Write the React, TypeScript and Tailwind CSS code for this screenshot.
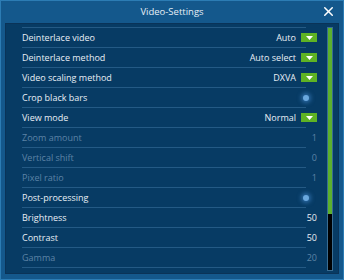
import { X } from "lucide-react";

type Row = {
  label: string;
  value?: string;
  kind: "select" | "toggle" | "number";
  disabled?: boolean;
};

const ROWS: Row[] = [
  { label: "Deinterlace video", value: "Auto", kind: "select" },
  { label: "Deinterlace method", value: "Auto select", kind: "select" },
  { label: "Video scaling method", value: "DXVA", kind: "select" },
  { label: "Crop black bars", kind: "toggle" },
  { label: "View mode", value: "Normal", kind: "select" },
  { label: "Zoom amount", value: "1", kind: "number", disabled: true },
  { label: "Vertical shift", value: "0", kind: "number", disabled: true },
  { label: "Pixel ratio", value: "1", kind: "number", disabled: true },
  { label: "Post-processing", kind: "toggle" },
  { label: "Brightness", value: "50", kind: "number" },
  { label: "Contrast", value: "50", kind: "number" },
  { label: "Gamma", value: "20", kind: "number", disabled: true },
];

function SelectArrow() {
  return (
    <span className="ml-[5px] flex h-[9px] w-[16px] items-center justify-center bg-[#5fb324]">
      <svg width="7" height="4" viewBox="0 0 7 4">
        <path d="M0 0 H7 L3.5 4 Z" fill="#ffffff" />
      </svg>
    </span>
  );
}

function Toggle() {
  return (
    <span className="mr-[8px] block h-[6px] w-[6px] rounded-full bg-[#6aa8de] shadow-[0_0_4px_2px_rgba(70,140,210,0.6)]" />
  );
}

export default function App() {
  return (
    <div
      className="flex h-[280px] w-[344px] flex-col border border-[#2c7cb4] bg-[#14588c] text-[9px]"
      style={{ fontFamily: "'Open Sans', 'Noto Sans', sans-serif" }}
    >
      <div className="relative flex h-[22px] items-center justify-center text-[9.5px] text-[#e6eef6]">
        <span>Video-Settings</span>
        <X className="absolute right-[7px] top-[3px] h-[15px] w-[15px] text-white" strokeWidth={2.4} />
      </div>

      <div className="mx-[4px] mb-[5px] flex flex-1 border border-[#0a3358] bg-[#073b64] pt-[3px]">
        <div className="flex flex-1 flex-col pl-[16px]">
          <div className="mr-[11px] h-px bg-[#245a85]" />
          {ROWS.map((row) => (
            <div key={row.label} className="flex flex-col">
              <div
                className={`flex h-[19px] items-center justify-between ${
                  row.disabled ? "text-[#5d83a6]" : "text-[#e8eef5]"
                }`}
              >
                <span>{row.label}</span>
                <span className="flex items-center">
                  {row.value && <span>{row.value}</span>}
                  {row.kind === "select" && <SelectArrow />}
                  {row.kind === "toggle" && <Toggle />}
                </span>
              </div>
              <div className="mr-[11px] h-px bg-[#245a85]" />
            </div>
          ))}
        </div>
        <div className="ml-[10px] mr-[5px] mb-[2px] flex w-[6px] flex-col border border-[#3a6d92] bg-black">
          <div className="h-[186px] bg-[#5cb02e]" />
        </div>
      </div>
    </div>
  );
}
